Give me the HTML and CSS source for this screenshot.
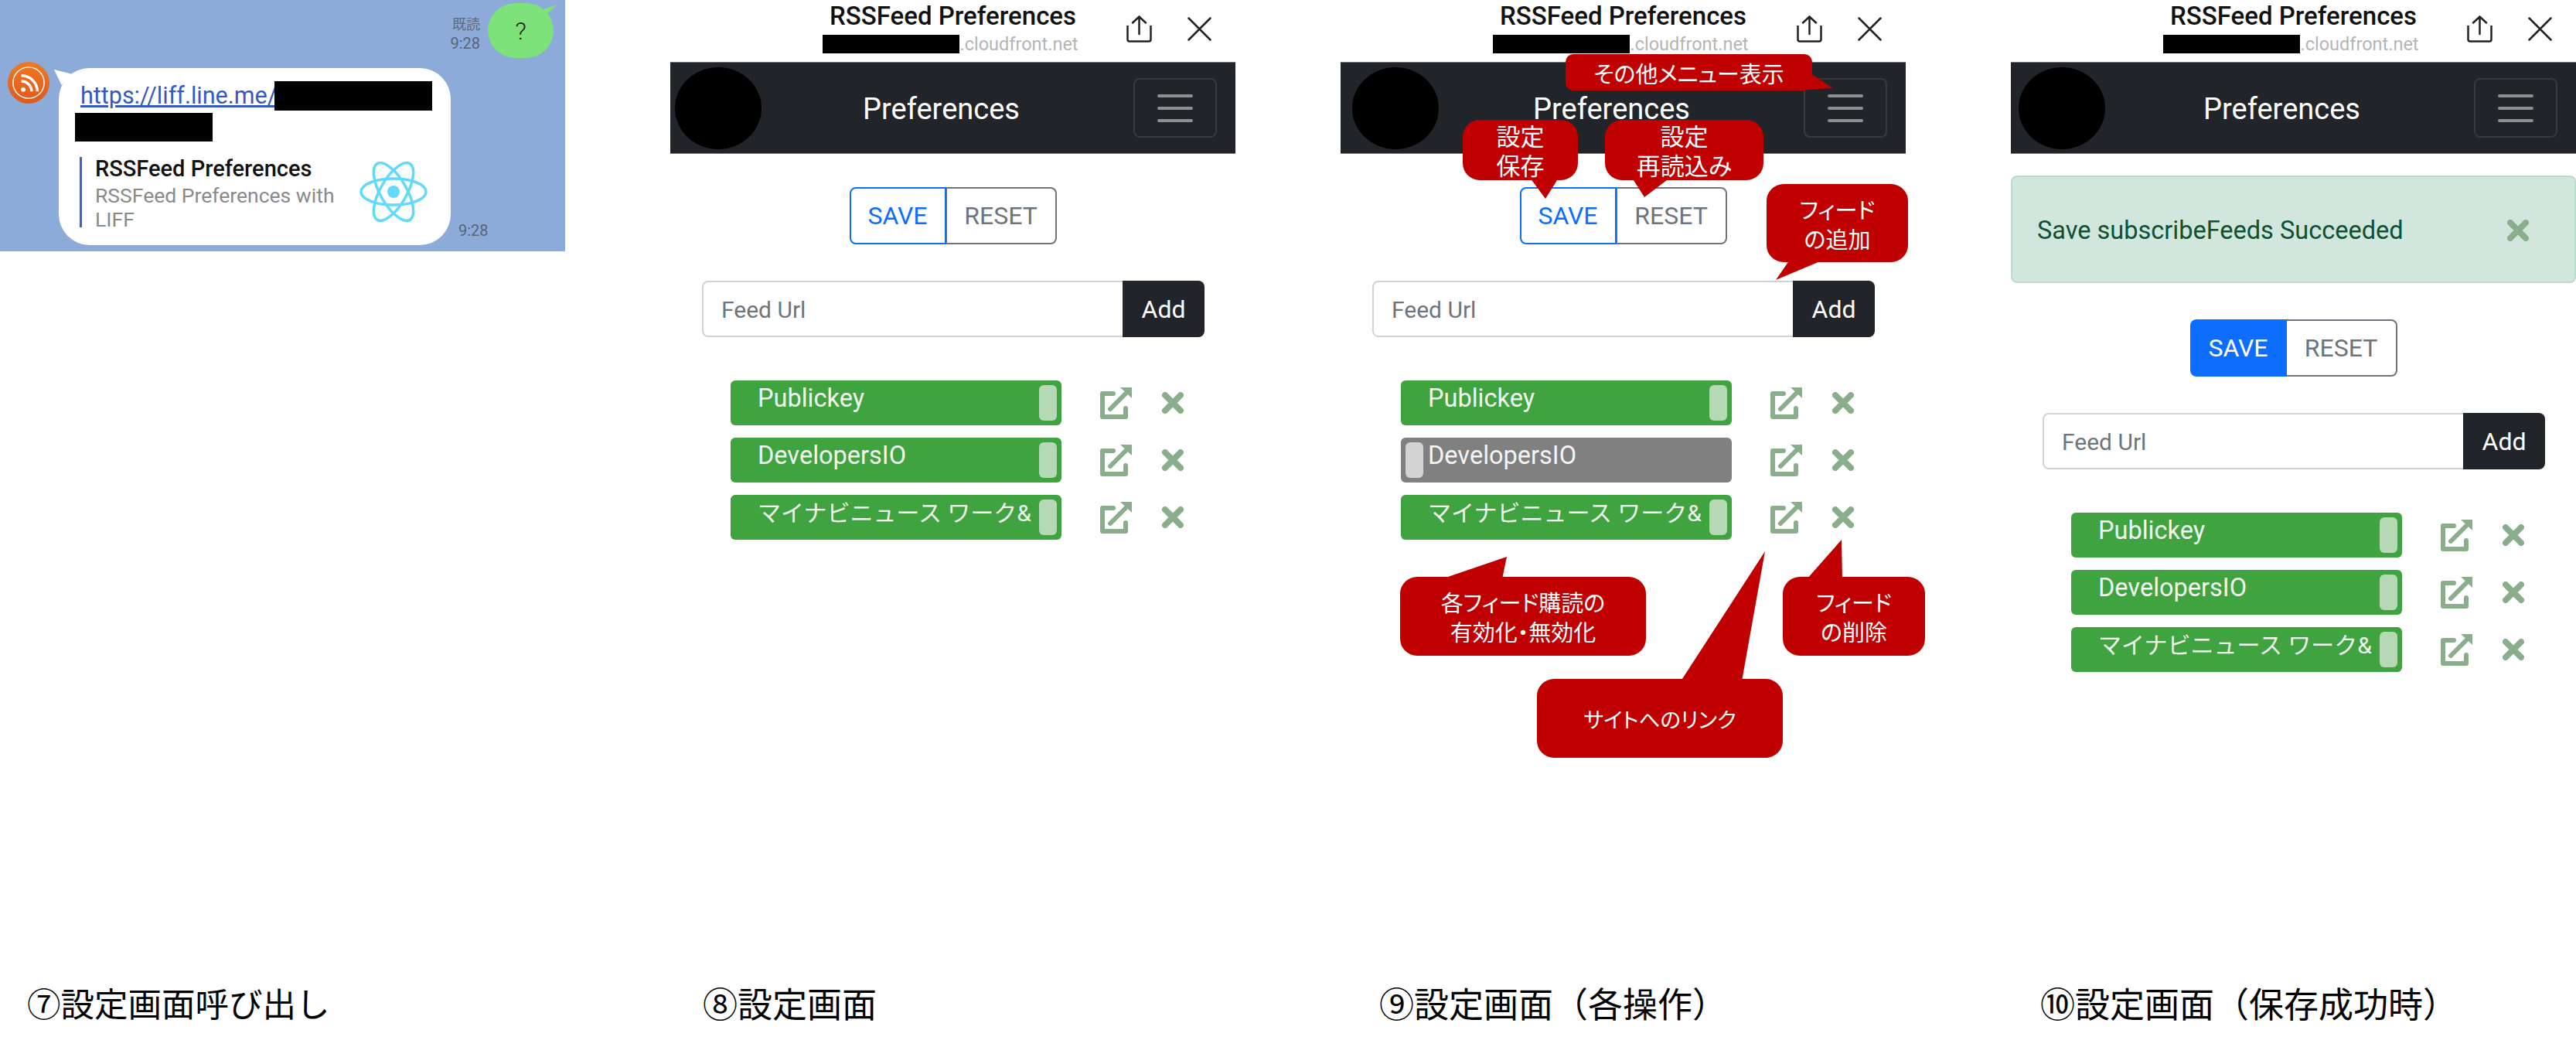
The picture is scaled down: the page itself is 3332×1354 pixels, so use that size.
FILE: index.html
```html
<!DOCTYPE html>
<html lang="ja">
<head>
    <meta charset="UTF-8">
    <title>RSSFeed Preferences</title>
    <link rel="stylesheet" href="styles.css">
</head>
<body>
    <svg class="defs" width="0" height="0">
        <symbol id="icon-share" viewBox="0 0 33 35">
            <path d="M1.500 13V31A2.500 2.500 0 0 0 4 33.500H29A2.500 2.500 0 0 0 31.500 31V13" fill="none" stroke="#222" stroke-width="2.500"/>
            <path d="M16.500 24V1.500M8 9.500L16.500 1.500L25 9.500" fill="none" stroke="#222" stroke-width="2.500" stroke-linecap="round"/>
        </symbol>
        <symbol id="icon-close" viewBox="0 0 31 31">
            <path d="M1.500 1.500L29.500 29.500M29.500 1.500L1.500 29.500" fill="none" stroke="#222" stroke-width="2.500" stroke-linecap="round"/>
        </symbol>
        <symbol id="icon-open" viewBox="0 0 42 42">
            <path d="M17 9H3V39H33V28" fill="none" stroke="#8aae8c" stroke-width="6" stroke-linecap="round" stroke-linejoin="round"/>
            <path d="M13 29L34 8" fill="none" stroke="#8aae8c" stroke-width="6" stroke-linecap="round"/>
            <polygon points="26,1 41,1 41,15" fill="#8aae8c"/>
        </symbol>
        <symbol id="icon-remove" viewBox="0 0 28 28">
            <path d="M4 4L24 24M24 4L4 24" fill="none" stroke="#8aae8c" stroke-width="8" stroke-linecap="round"/>
        </symbol>
    </svg>

    <div class="page">
        <!-- 7 -->
        <section class="panel">
            <div class="chat">
                <div class="chat-out">
                    <div class="meta">
                        <div class="read">既読</div>
                        <div class="time">9:28</div>
                    </div>
                    <div class="green-bubble">?</div>
                </div>
                <div class="chat-in">
                    <svg class="avatar" viewBox="0 0 55 55">
                        <defs>
                            <linearGradient id="avatar-bg" x1="0" y1="0" x2="0" y2="1">
                                <stop offset="0" stop-color="#ee7a22"/>
                                <stop offset="1" stop-color="#e2571a"/>
                            </linearGradient>
                        </defs>
                        <circle cx="27.500" cy="27.500" r="27.500" fill="url(#avatar-bg)"/>
                        <circle cx="27.500" cy="27.500" r="20.500" fill="none" stroke="#fff" stroke-width="1.500"/>
                        <circle cx="20.500" cy="36.500" r="3" fill="#fff"/>
                        <path d="M18 25.500A13.500 13.500 0 0 1 31.500 39M18 18A21 21 0 0 1 39 39" fill="none" stroke="#fff" stroke-width="3.500"/>
                    </svg>
                    <div class="bubble">
                        <div class="url-line">
                            <a class="url">https://liff.line.me/</a>
                            <span class="mask mask-url"></span>
                        </div>
                        <div class="mask mask-url2"></div>
                        <div class="card">
                            <div class="card-text">
                                <div class="card-title">RSSFeed Preferences</div>
                                <div class="card-desc">RSSFeed Preferences with LIFF</div>
                            </div>
                            <svg class="react" viewBox="0 0 88 78">
                                <g fill="none" stroke="#61dafb" stroke-width="3.500">
                                    <ellipse cx="44" cy="39" rx="42" ry="17"/>
                                    <ellipse cx="44" cy="39" rx="42" ry="17" transform="rotate(60 44 39)"/>
                                    <ellipse cx="44" cy="39" rx="42" ry="17" transform="rotate(120 44 39)"/>
                                </g>
                                <circle cx="44" cy="39" r="8" fill="#61dafb"/>
                            </svg>
                        </div>
                    </div>
                    <div class="time time-in">9:28</div>
                </div>
            </div>
            <div class="caption caption-7">⑦設定画面呼び出し</div>
        </section>

        <!-- 8 -->
        <section class="panel">
            <header class="browser">
                <div></div>
                <div class="browser-title">
                    <div class="site-name">RSSFeed Preferences</div>
                    <div class="site-url"><span class="mask mask-host"></span>.cloudfront.net</div>
                </div>
                <div class="browser-actions">
                    <svg class="share"><use href="#icon-share"/></svg>
                    <svg class="close"><use href="#icon-close"/></svg>
                </div>
            </header>
            <nav class="navbar">
                <div class="logo"></div>
                <div class="nav-title">Preferences</div>
                <div class="toggler"><span></span><span></span><span></span></div>
            </nav>
            <div class="btn-group">
                <div class="btn btn-save">SAVE</div>
                <div class="btn btn-reset">RESET</div>
            </div>
            <div class="feed-form">
                <div class="feed-input">Feed Url</div>
                <div class="feed-add">Add</div>
            </div>
            <div class="feeds">
                <div class="feed">
                    <div class="switch"><span class="switch-label">Publickey</span><span class="knob"></span></div>
                    <svg class="open"><use href="#icon-open"/></svg>
                    <svg class="remove"><use href="#icon-remove"/></svg>
                </div>
                <div class="feed">
                    <div class="switch"><span class="switch-label">DevelopersIO</span><span class="knob"></span></div>
                    <svg class="open"><use href="#icon-open"/></svg>
                    <svg class="remove"><use href="#icon-remove"/></svg>
                </div>
                <div class="feed">
                    <div class="switch"><span class="switch-label switch-label-ja">マイナビニュース ワーク&amp;</span><span class="knob"></span></div>
                    <svg class="open"><use href="#icon-open"/></svg>
                    <svg class="remove"><use href="#icon-remove"/></svg>
                </div>
            </div>
            <div class="caption caption-8">⑧設定画面</div>
        </section>

        <!-- 9 -->
        <section class="panel">
            <header class="browser">
                <div></div>
                <div class="browser-title">
                    <div class="site-name">RSSFeed Preferences</div>
                    <div class="site-url"><span class="mask mask-host"></span>.cloudfront.net</div>
                </div>
                <div class="browser-actions">
                    <svg class="share"><use href="#icon-share"/></svg>
                    <svg class="close"><use href="#icon-close"/></svg>
                </div>
            </header>
            <nav class="navbar">
                <div class="logo logo-shift"></div>
                <div class="nav-title">Preferences</div>
                <div class="toggler"><span></span><span></span><span></span></div>
            </nav>
            <div class="btn-group">
                <div class="btn btn-save">SAVE</div>
                <div class="btn btn-reset">RESET</div>
            </div>
            <div class="feed-form">
                <div class="feed-input">Feed Url</div>
                <div class="feed-add">Add</div>
            </div>
            <div class="feeds">
                <div class="feed">
                    <div class="switch"><span class="switch-label">Publickey</span><span class="knob"></span></div>
                    <svg class="open"><use href="#icon-open"/></svg>
                    <svg class="remove"><use href="#icon-remove"/></svg>
                </div>
                <div class="feed">
                    <div class="switch switch-off"><span class="knob"></span><span class="switch-label">DevelopersIO</span></div>
                    <svg class="open"><use href="#icon-open"/></svg>
                    <svg class="remove"><use href="#icon-remove"/></svg>
                </div>
                <div class="feed">
                    <div class="switch"><span class="switch-label switch-label-ja">マイナビニュース ワーク&amp;</span><span class="knob"></span></div>
                    <svg class="open"><use href="#icon-open"/></svg>
                    <svg class="remove"><use href="#icon-remove"/></svg>
                </div>
            </div>
            <div class="caption caption-9">⑨設定画面（各操作）</div>

            <svg class="tails" viewBox="0 0 800 1000">
                <polygon points="608,95 637,114 588,117"/>
                <polygon points="245,230 282,230 265,257"/>
                <polygon points="377,230 426,230 393,255"/>
                <polygon points="581,336 625,336 563,362"/>
                <polygon points="130,749 215,720 209,749"/>
                <polygon points="603,749 648,698 649,749"/>
                <polygon points="440,881 549,713 519,881"/>
            </svg>
            <div class="callout callout-menu">その他メニュー表示</div>
            <div class="callout callout-save">設定<br>保存</div>
            <div class="callout callout-reset">設定<br>再読込み</div>
            <div class="callout callout-add">フィード<br>の追加</div>
            <div class="callout callout-toggle">各フィード購読の<br>有効化・無効化</div>
            <div class="callout callout-delete">フィード<br>の削除</div>
            <div class="callout callout-link">サイトへのリンク</div>
        </section>

        <!-- 10 -->
        <section class="panel">
            <header class="browser">
                <div></div>
                <div class="browser-title">
                    <div class="site-name">RSSFeed Preferences</div>
                    <div class="site-url"><span class="mask mask-host"></span>.cloudfront.net</div>
                </div>
                <div class="browser-actions">
                    <svg class="share"><use href="#icon-share"/></svg>
                    <svg class="close"><use href="#icon-close"/></svg>
                </div>
            </header>
            <nav class="navbar">
                <div class="logo logo-shift2"></div>
                <div class="nav-title">Preferences</div>
                <div class="toggler"><span></span><span></span><span></span></div>
            </nav>
            <div class="alert">
                <span>Save subscribeFeeds Succeeded</span>
                <svg class="remove"><use href="#icon-remove"/></svg>
            </div>
            <div class="btn-group">
                <div class="btn btn-save btn-active">SAVE</div>
                <div class="btn btn-reset">RESET</div>
            </div>
            <div class="feed-form">
                <div class="feed-input">Feed Url</div>
                <div class="feed-add">Add</div>
            </div>
            <div class="feeds">
                <div class="feed">
                    <div class="switch"><span class="switch-label">Publickey</span><span class="knob"></span></div>
                    <svg class="open"><use href="#icon-open"/></svg>
                    <svg class="remove"><use href="#icon-remove"/></svg>
                </div>
                <div class="feed">
                    <div class="switch"><span class="switch-label">DevelopersIO</span><span class="knob"></span></div>
                    <svg class="open"><use href="#icon-open"/></svg>
                    <svg class="remove"><use href="#icon-remove"/></svg>
                </div>
                <div class="feed">
                    <div class="switch"><span class="switch-label switch-label-ja">マイナビニュース ワーク&amp;</span><span class="knob"></span></div>
                    <svg class="open"><use href="#icon-open"/></svg>
                    <svg class="remove"><use href="#icon-remove"/></svg>
                </div>
            </div>
            <div class="caption caption-10">⑩設定画面（保存成功時）</div>
        </section>
    </div>
</body>
</html>
```

FILE: styles.css
```css
body {
    margin: 0;
    background: #fff;
    font-family: Roboto, "Noto Sans CJK JP", sans-serif;
    color: #212529;
}

.defs {
    display: block;
    height: 0;
}

.page {
    display: flex;
    gap: 136px;
    height: 1354px;
    overflow: hidden;
}

.panel {
    position: relative;
    display: flex;
    flex-direction: column;
    flex: none;
    width: 731px;
}

.caption {
    margin-top: auto;
    padding-bottom: 27px;
    font-family: "Noto Sans CJK JP", sans-serif;
    font-size: 45px;
    line-height: 60px;
    color: #000;
    white-space: nowrap;
}

.caption-7 { padding-left: 35px; font-size: 43.500px; }
.caption-8 { padding-left: 42px; }
.caption-9 { padding-left: 50px; }
.caption-10 { padding-left: 38px; }

.mask {
    display: block;
    background: #000;
}

/* line chat */
.chat {
    box-sizing: border-box;
    height: 325px;
    padding-top: 4px;
    background: #8cabd9;
}

.chat-out {
    display: flex;
    justify-content: flex-end;
    gap: 10px;
    padding-right: 15px;
}

.meta {
    margin-top: 16px;
    text-align: right;
    color: #5d6b80;
}

.read {
    font-size: 18px;
    line-height: 24px;
}

.time {
    font-size: 20px;
    line-height: 24px;
    color: #56647a;
}

.green-bubble {
    position: relative;
    display: flex;
    align-items: center;
    justify-content: center;
    width: 85px;
    height: 71px;
    border-radius: 36px;
    background: #7de27a;
    font-size: 32px;
    font-weight: 300;
    color: #222;
}

.green-bubble::after {
    content: "";
    position: absolute;
    right: -5px;
    top: 2px;
    width: 22px;
    height: 12px;
    background: #7de27a;
    clip-path: polygon(100% 0, 0 60%, 40% 100%);
}

.chat-in {
    display: flex;
    gap: 12px;
    margin-top: 13px;
    padding-left: 10px;
}

.avatar {
    flex: none;
    width: 54px;
    height: 54px;
    margin-top: -8px;
}

.bubble {
    position: relative;
    box-sizing: border-box;
    width: 507px;
    height: 229px;
    padding: 17px 30px 0 28px;
    border-radius: 40px;
    background: #fff;
}

.bubble::before {
    content: "";
    position: absolute;
    left: -6px;
    top: 2px;
    width: 24px;
    height: 20px;
    background: #fff;
    clip-path: polygon(0 0, 100% 30%, 40% 100%);
}

.url-line {
    display: flex;
    align-items: center;
}

.url {
    flex: none;
    width: 251px;
    font-size: 30.500px;
    line-height: 38px;
    color: #3558c8;
    text-decoration: underline;
    white-space: nowrap;
}

.mask-url {
    flex: none;
    width: 204px;
    height: 38px;
}

.mask-url2 {
    width: 178px;
    height: 37px;
    margin: 3px 0 0 -7px;
}

.card {
    display: flex;
    justify-content: space-between;
    box-sizing: border-box;
    height: 91px;
    margin: 20px 0 0 -1px;
    padding-left: 17px;
    border-left: 3px solid #4060d8;
}

.card-text {
    width: 325px;
}

.card-title {
    margin-bottom: 4px;
    font-size: 29px;
    font-weight: 500;
    line-height: 30px;
    color: #111;
    white-space: nowrap;
}

.card-desc {
    font-size: 26.500px;
    line-height: 31px;
    color: #8a8a8a;
}

.react {
    width: 88px;
    height: 78px;
    margin-top: 6px;
}

.time-in {
    align-self: flex-end;
    margin-bottom: 7px;
    margin-left: -2px;
}

/* liff browser bar */
.browser {
    display: grid;
    grid-template-columns: 1fr auto 1fr;
    box-sizing: border-box;
    height: 80px;
    padding-top: 3px;
}

.browser-title {
    display: flex;
    flex-direction: column;
    align-items: center;
}

.site-name {
    font-size: 33px;
    font-weight: 500;
    line-height: 36px;
    color: #111;
}

.site-url {
    display: flex;
    align-items: center;
    margin-top: 6px;
    margin-right: 6px;
    font-size: 23.500px;
    line-height: 24px;
    color: #b5b5b5;
}

.mask-host {
    width: 177px;
    height: 24px;
}

.browser-actions {
    display: flex;
    justify-content: flex-end;
    gap: 46px;
    padding-top: 17px;
    padding-right: 31px;
}

.share {
    width: 33px;
    height: 35px;
}

.close {
    width: 31px;
    height: 31px;
    margin-top: 2px;
}

.navbar {
    display: flex;
    align-items: center;
    justify-content: space-between;
    box-sizing: border-box;
    height: 119px;
    padding: 0 24px 0 6px;
    border-top: 1px solid #777;
    border-bottom: 1px solid #777;
    background: #212529;
}

.logo {
    width: 112px;
    height: 106px;
    border-radius: 50%;
    background: #000;
}

.logo-shift {
    margin-left: 9px;
    margin-right: -9px;
}

.logo-shift2 {
    margin-left: 4px;
    margin-right: -4px;
}

.nav-title {
    margin-right: 16px;
    padding-top: 2px;
    font-size: 38px;
    color: #fff;
}

.toggler {
    display: flex;
    flex-direction: column;
    align-items: center;
    justify-content: center;
    gap: 12px;
    box-sizing: border-box;
    width: 108px;
    height: 77px;
    border: 2px solid rgba(255, 255, 255, .1);
    border-radius: 8px;
}

.toggler span {
    width: 46px;
    height: 4px;
    border-radius: 2px;
    background: #8d8f91;
}

.btn-group {
    display: flex;
    justify-content: center;
    height: 74px;
    margin-top: 43px;
}

.btn {
    display: flex;
    align-items: center;
    justify-content: center;
    box-sizing: border-box;
    font-size: 32px;
}

.btn-save {
    width: 125px;
    border: 2px solid #0d6efd;
    border-radius: 8px 0 0 8px;
    color: #0d6efd;
}

.btn-active {
    background: #0d6efd;
    color: #fff;
}

.btn-reset {
    width: 143px;
    border: 2px solid #6c757d;
    border-left-width: 1px;
    border-radius: 0 8px 8px 0;
    color: #6c757d;
}

.btn-active + .btn-reset {
    border-left: 0;
}

.feed-form {
    display: flex;
    height: 73px;
    margin: 47px 0 0 41px;
}

.feed-input {
    box-sizing: border-box;
    width: 544px;
    padding-left: 23px;
    border: 2px solid #ced4da;
    border-right: 0;
    border-radius: 8px 0 0 8px;
    font-size: 30px;
    line-height: 71px;
    color: #6c757d;
}

.feed-add {
    width: 106px;
    border-radius: 0 8px 8px 0;
    background: #212529;
    font-size: 32px;
    line-height: 75px;
    text-align: center;
    color: #fff;
}

.feeds {
    display: flex;
    flex-direction: column;
    gap: 16px;
    margin: 56px 0 0 78px;
}

.feed {
    display: flex;
    align-items: center;
}

.switch {
    display: flex;
    align-items: center;
    justify-content: space-between;
    box-sizing: border-box;
    width: 428px;
    height: 58px;
    padding: 0 6px 0 35px;
    overflow: hidden;
    border-radius: 6px;
    background: #3fa33f;
    color: #fff;
}

.switch-off {
    justify-content: flex-start;
    gap: 6px;
    padding-left: 6px;
    background: #808080;
}

.switch-label {
    align-self: flex-start;
    padding-top: 1px;
    font-size: 32.500px;
    line-height: 45px;
    white-space: nowrap;
    opacity: .92;
}

.switch-label-ja {
    font-size: 30px;
}

.knob {
    flex: none;
    width: 23px;
    height: 46px;
    border-radius: 6px;
    background: #b5d8b5;
}

.switch-off .knob {
    background: #d3d3d3;
}

.open {
    flex: none;
    width: 42px;
    height: 42px;
    margin-left: 50px;
}

.remove {
    flex: none;
    width: 28px;
    height: 28px;
}

.feed .remove {
    margin-left: 38px;
}

.alert {
    display: flex;
    align-items: center;
    justify-content: space-between;
    box-sizing: border-box;
    height: 139px;
    margin: 28px 0 4px;
    padding: 2px 59px 0 32px;
    border: 2px solid #badbcc;
    border-radius: 8px;
    background: #d1e7dd;
    font-size: 32.500px;
    color: #0f5132;
}

/* annotations on screen 9 */
.tails {
    position: absolute;
    left: 0;
    top: 0;
    width: 800px;
    height: 1000px;
    fill: #c00000;
}

.callout {
    position: absolute;
    display: flex;
    align-items: center;
    justify-content: center;
    border-radius: 22px;
    background: #c00000;
    font-family: "Noto Sans CJK JP", sans-serif;
    font-feature-settings: "palt";
    font-size: 31px;
    line-height: 38px;
    text-align: center;
    color: #fff;
    white-space: nowrap;
}

.callout-menu { left: 291px; top: 70px; width: 319px; height: 47px; border-radius: 10px; font-size: 29px; }
.callout-save { left: 158px; top: 155px; width: 149px; height: 78px; }
.callout-reset { left: 342px; top: 155px; width: 205px; height: 78px; }
.callout-add { left: 551px; top: 238px; width: 183px; height: 101px; font-size: 29px; }
.callout-toggle { left: 77px; top: 746px; width: 318px; height: 102px; font-size: 29px; }
.callout-delete { left: 572px; top: 746px; width: 184px; height: 102px; font-size: 29px; }
.callout-link { left: 254px; top: 878px; width: 318px; height: 102px; font-size: 27.500px; }
```
